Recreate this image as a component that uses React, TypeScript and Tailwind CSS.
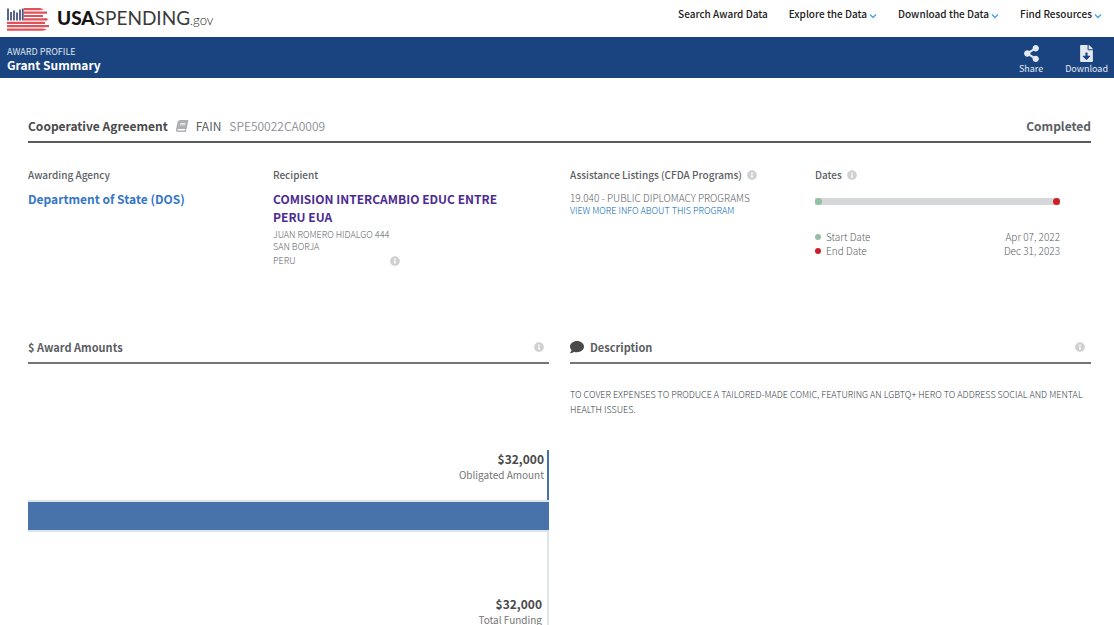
import React, { useState } from 'react';
import { FaBook, FaComment, FaFileDownload, FaInfoCircle, FaShareAlt } from 'react-icons/fa';

const navItems = [
  { label: 'Search Award Data', menu: false },
  { label: 'Explore the Data', menu: true },
  { label: 'Download the Data', menu: true },
  { label: 'Find Resources', menu: true },
];

const dates = [
  { label: 'Start Date', value: 'Apr 07, 2022', dot: 'bg-[#94bfa2]' },
  { label: 'End Date', value: 'Dec 31, 2023', dot: 'bg-[#cd2026]' },
];

function Logo() {
  return (
    <a href="#" aria-label="USAspending.gov" className="flex items-center gap-2">
      <svg width="42" height="23" viewBox="0 0 42 23" fill="none">
        <path d="M17 1.2H33M17 4.6H40M17 8H36M17 11.4H40M0 14.8H38M0 18.2H42M0 21.6H36" stroke="#e0525a" strokeWidth="2.2" />
        <path d="M33 .1L37 1.2L33 2.3ZM38 10.3L42 11.4L38 12.5ZM36 20.5L40 21.6L36 22.7Z" fill="#e0525a" />
        <path d="M1 .5V12.5M4 4V12.5M7 2.5V12.5M10 4.5V12.5M13 1.5V12.5M15.8 .5V12.5" stroke="#4a5580" strokeWidth="1.8" />
      </svg>
      <span className="flex items-baseline font-[Lato] text-[19px] leading-6 text-[#161616]">
        <b className="font-black">USA</b>
        <span className="text-[#3a3a3a]">SPENDING</span>
        <span className="text-[13px] font-light">.gov</span>
      </span>
    </a>
  );
}

function Info({ label }: { label: string }) {
  return (
    <button type="button" aria-label={label} className="text-[#d0d0d0]">
      <FaInfoCircle size={10} />
    </button>
  );
}

function Amount({ value, label }: { value: string; label: string }) {
  return (
    <div className="text-right">
      <div className="text-xs leading-4 font-bold text-[#4a4a4a]">{value}</div>
      <div className="text-[10px] leading-4 text-[#757575]">{label}</div>
    </div>
  );
}

export default function App() {
  const [active, setActive] = useState('');

  return (
    <div className="min-h-screen bg-white font-['Noto_Sans_CJK_SC',sans-serif] text-[#5b5e63]">
      <header className="flex h-[37px] items-start justify-between pt-[6px] pr-3 pl-[7px]">
        <Logo />
        <nav className="flex gap-[21px]">
          {navItems.map((item) => (
            <button
              key={item.label}
              type="button"
              aria-expanded={item.menu ? active === item.label : undefined}
              onClick={() => setActive(active === item.label ? '' : item.label)}
              className="flex items-center gap-[2px] text-[10px] leading-4 font-medium text-[#212121]"
            >
              {item.label}
              {item.menu && (
                <svg width="8" height="6" viewBox="0 0 8 6" className="mt-1" fill="none" stroke="#4aa0dc" strokeWidth="1.3">
                  <path d="M1 1.5L4 4.5L7 1.5" />
                </svg>
              )}
            </button>
          ))}
        </nav>
      </header>

      <div className="flex h-[41px] items-center justify-between bg-[#1a4480] pr-[6px] pl-[7px] text-white">
        <div>
          <div className="text-[9px] leading-[13px] text-[#dce4ef]">AWARD PROFILE</div>
          <h1 className="text-xs leading-[13px] font-bold">Grant Summary</h1>
        </div>
        <div className="flex gap-[22px] pt-[6px] text-[#e4e9f1]">
          <button type="button" className="flex flex-col items-center text-[9px] leading-[14px]">
            <FaShareAlt size={17} />
            Share
          </button>
          <button type="button" className="flex flex-col items-center text-[9px] leading-[14px]">
            <FaFileDownload size={17} />
            Download
          </button>
        </div>
      </div>

      <main className="pt-[38px] pr-[23px] pl-7">
        <div className="flex items-center justify-between border-b-2 border-[#5b5b5b] pb-[5px] text-xs leading-5">
          <div className="flex items-center">
            <h2 className="font-bold text-[#4a4a4a]">Cooperative Agreement</h2>
            <FaBook size={12} className="mx-2 -skew-x-12 text-[#aeb0b5]" />
            <span>FAIN</span>
            <span className="ml-2 font-[350] text-[#8a8d93]">SPE50022CA0009</span>
          </div>
          <div className="font-bold">Completed</div>
        </div>

        <div className="grid h-[194px] grid-cols-2 gap-[21px] pt-6">
          <div className="grid grid-cols-2 pr-[31px]">
            <section>
              <h3 className="text-[10px] leading-4 font-medium">Awarding Agency</h3>
              <a href="#" className="mt-[7px] block text-xs leading-[18px] font-bold text-[#3676c8]">
                Department of State (DOS)
              </a>
            </section>
            <section>
              <h3 className="text-[10px] leading-4 font-medium">Recipient</h3>
              <a href="#" className="mt-[7px] block text-xs leading-[18px] font-bold text-[#4c2c92]">
                COMISION INTERCAMBIO EDUC ENTRE PERU EUA
              </a>
              <address className="mt-[3px] text-[9px] leading-3 font-light not-italic">
                JUAN ROMERO HIDALGO 444
                <br />
                SAN BORJA
                <div className="flex w-[127px] items-center justify-between pt-[2px]">
                  PERU
                  <Info label="Recipient details" />
                </div>
              </address>
            </section>
          </div>

          <div className="grid grid-cols-2 pr-[31px]">
            <section>
              <h3 className="flex items-center gap-[5px] text-[10px] leading-4 font-medium">
                Assistance Listings (CFDA Programs)
                <Info label="About assistance listings" />
              </h3>
              <p className="mt-2 text-[10px] leading-[14px] font-light">19.040 - PUBLIC DIPLOMACY PROGRAMS</p>
              <a href="#" className="block text-[9px] leading-3 font-light text-[#0064b0]">
                VIEW MORE INFO ABOUT THIS PROGRAM
              </a>
            </section>
            <section>
              <h3 className="flex items-center gap-[5px] text-[10px] leading-4 font-medium">
                Dates
                <Info label="About dates" />
              </h3>
              <div className="mt-[15px] flex h-[7px] items-center justify-between bg-[#d6d7d9]">
                <span className="size-[7px] rounded-full bg-[#94bfa2]" />
                <span className="size-[7px] rounded-full bg-[#cd2026]" />
              </div>
              <dl className="mt-[25px] text-[10px] leading-[14px] font-light">
                {dates.map((date) => (
                  <div key={date.label} className="flex items-center">
                    <span className={`mr-[5px] size-[6px] rounded-full ${date.dot}`} />
                    <dt className="flex-1">{date.label}</dt>
                    <dd>{date.value}</dd>
                  </div>
                ))}
              </dl>
            </section>
          </div>
        </div>

        <div className="grid grid-cols-2 gap-[21px]">
          <section>
            <div className="flex items-center justify-between border-b-2 border-[#757575] pr-[5px] pb-[5px]">
              <h2 className="text-[11px] leading-5 font-bold">$ Award Amounts</h2>
              <Info label="About award amounts" />
            </div>
            <div className="mt-[86px]">
              <div className="h-[50px] border-r-2 border-[#4572a7] pt-px pr-[3px]">
                <Amount value="$32,000" label="Obligated Amount" />
              </div>
              <div className="h-8 border-y-2 border-[#dce4ee] bg-[#4773aa]" />
              <div className="border-r-2 border-[#dce4ee] pt-16 pr-[5px]">
                <Amount value="$32,000" label="Total Funding" />
              </div>
            </div>
          </section>
          <section>
            <div className="flex items-center border-b-2 border-[#757575] pr-[6px] pb-[5px]">
              <FaComment size={14} className="mr-[6px] text-[#4a4a4a]" />
              <h2 className="flex-1 text-[11px] leading-5 font-bold">Description</h2>
              <Info label="About description" />
            </div>
            <p className="mt-[23px] text-[9px] leading-[15px] font-light text-[#323a45]">
              TO COVER EXPENSES TO PRODUCE A TAILORED-MADE COMIC, FEATURING AN LGBTQ+ HERO TO ADDRESS SOCIAL AND MENTAL HEALTH ISSUES.
            </p>
          </section>
        </div>
      </main>
    </div>
  );
}
